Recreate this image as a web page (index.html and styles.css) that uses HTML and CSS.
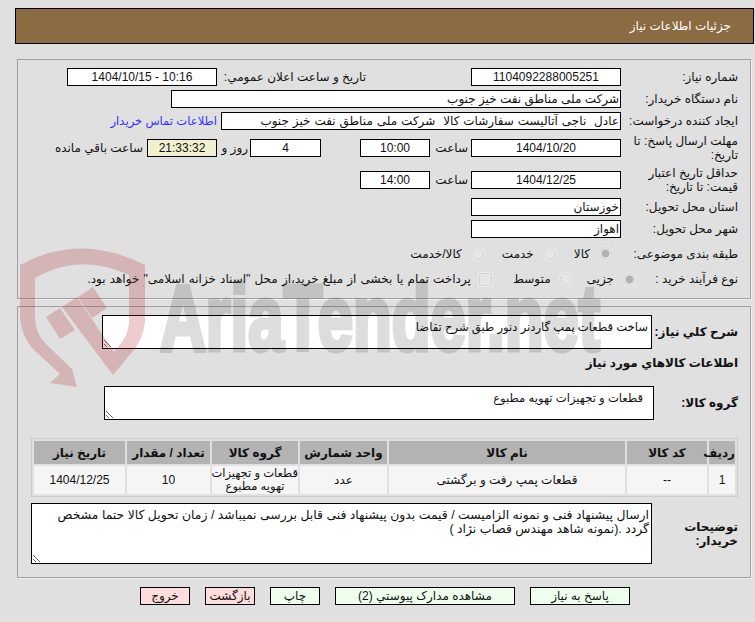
FILE: index.html
```html
<!DOCTYPE html>
<html lang="fa" dir="rtl">
<head>
<meta charset="utf-8">
<title>جزئیات اطلاعات نیاز</title>
<link rel="stylesheet" href="styles.css">
</head>
<body>
<header class="title-bar"><h1 class="title">جزئیات اطلاعات نیاز</h1></header>

<section class="panel panel-info">
  <div class="row">
    <span class="label">شماره نیاز:</span>
    <input class="field w150 center" readonly value="1104092288005251">
    <span class="announce">تاریخ و ساعت اعلان عمومي:</span>
    <input class="field w150 center" dir="ltr" readonly value="1404/10/15 - 10:16">
  </div>
  <div class="row">
    <span class="label">نام دستگاه خریدار:</span>
    <input class="field w450" readonly value="شرکت ملی مناطق نفت خیز جنوب">
  </div>
  <div class="row">
    <span class="label">ایجاد کننده درخواست:</span>
    <input class="field w400" readonly value="عادل  ناجی آتالیست سفارشات کالا  شرکت ملی مناطق نفت خیز جنوب">
    <a class="contact" href="#">اطلاعات تماس خریدار</a>
  </div>
  <div class="row row-tall">
    <span class="label">مهلت ارسال پاسخ: تا تاریخ:</span>
    <input class="field w150 center" readonly value="1404/10/20">
    <span class="time-label">ساعت</span>
    <input class="field w70 center" readonly value="10:00">
    <input class="field w71 center days" readonly value="4">
    <span class="days-label">روز و</span>
    <input class="field w70 center timer" readonly value="21:33:32">
    <span class="remain">ساعت باقي مانده</span>
  </div>
  <div class="row row-tall">
    <span class="label">حداقل تاریخ اعتبار قیمت: تا تاریخ:</span>
    <input class="field w150 center" readonly value="1404/12/25">
    <span class="time-label">ساعت</span>
    <input class="field w70 center" readonly value="14:00">
  </div>
  <div class="row">
    <span class="label">استان محل تحویل:</span>
    <input class="field w150" readonly value="خوزستان">
  </div>
  <div class="row">
    <span class="label">شهر محل تحویل:</span>
    <input class="field w150" readonly value="اهواز">
  </div>
  <div class="row row-radio">
    <span class="label">طبقه بندی موضوعی:</span>
    <label class="choice c-first"><input type="radio" name="subject" disabled checked><span>کالا</span></label>
    <label class="choice c-next"><input type="radio" name="subject" disabled><span>خدمت</span></label>
    <label class="choice c-next"><input type="radio" name="subject" disabled><span>کالا/خدمت</span></label>
  </div>
  <div class="row row-process">
    <span class="label label-short">نوع فرآیند خرید :</span>
    <label class="choice"><input type="radio" name="process" disabled checked><span>جزیی</span></label>
    <label class="choice c-mid"><input type="radio" name="process" disabled><span>متوسط</span></label>
    <label class="choice c-pay"><input type="checkbox" disabled><span class="pay-text">پرداخت تمام یا بخشی از مبلغ خرید،از محل "اسناد خزانه اسلامی" خواهد بود.</span></label>
  </div>
</section>

<section class="panel panel-goods">
  <div class="row-b">
    <span class="label-b w86">شرح کلي نیاز:</span>
    <textarea class="box desc" readonly>ساخت قطعات پمپ گاردنر دنور طبق شرح تقاضا</textarea>
  </div>
  <div class="goods-heading">اطلاعات کالاهاي مورد نیاز</div>
  <div class="row-b">
    <span class="label-b w84">گروه کالا:</span>
    <textarea class="box group" readonly>قطعات و تجهیزات تهویه مطبوع</textarea>
  </div>
  <table class="goods">
    <colgroup>
      <col class="col-idx"><col class="col-code"><col class="col-name"><col class="col-unit"><col class="col-group"><col class="col-qty"><col class="col-date">
    </colgroup>
    <thead>
      <tr><th>ردیف</th><th>کد کالا</th><th>نام کالا</th><th>واحد شمارش</th><th>گروه کالا</th><th>تعداد / مقدار</th><th>تاریخ نیاز</th></tr>
    </thead>
    <tbody>
      <tr><td>1</td><td>--</td><td>قطعات پمپ رفت و برگشتی</td><td>عدد</td><td class="small">قطعات و تجهیزات<br>تهویه مطبوع</td><td>10</td><td>1404/12/25</td></tr>
    </tbody>
  </table>
  <div class="row-b">
    <span class="label-b w86">توضیحات خریدار:</span>
    <textarea class="box note" readonly>ارسال پیشنهاد فنی و نمونه الزامیست / قیمت بدون پیشنهاد فنی قابل بررسی نمیباشد / زمان تحویل کالا حتما مشخص
گردد .(نمونه شاهد مهندس قصاب نژاد )</textarea>
  </div>
</section>

<nav class="actions">
  <button class="btn go b100">پاسخ به نیاز</button>
  <button class="btn go b180">مشاهده مدارک پیوستي (2)</button>
  <button class="btn go b50">چاپ</button>
  <button class="btn stop b50">بازگشت</button>
  <button class="btn stop b50">خروج</button>
</nav>

<svg class="watermark" viewBox="0 0 755 622" aria-hidden="true">
  <g class="wm-red">
    <path d="M20 265 Q80 232 145 265 L145 322 Q143 340 132 352 L113 375 L62 307 L77 297 L114 352 L122 342 Q129 332 129 320 L129 275 Q80 252 35 278 L35 320 Q36 334 46 344 L72 369 L77 387 L50 383 L60 374 L32 348 Q21 334 20 318 Z"/>
    <path d="M78 297 L93 287 L107 308 L92 318 Z"/>
    <path d="M46 317 L60 308 L75 330 L60 339 Z"/>
  </g>
  <text class="wm-text" x="160" y="350" textLength="440" lengthAdjust="spacingAndGlyphs">AriaTender.net</text>
</svg>
</body>
</html>
```
FILE: styles.css
```css
* { box-sizing: border-box; }
html, body { margin: 0; padding: 0; }
body {
  position: relative;
  width: 755px;
  height: 622px;
  overflow: hidden;
  background: #e0e0e0;
  color: #111;
  font-family: "Liberation Sans", "DejaVu Sans", sans-serif;
  font-size: 12px;
  line-height: 14px;
}
.title-bar {
  margin: 8px 1px 0 15px;
  height: 36px;
  background: #8b6b42;
  border: 1px solid #000;
  display: flex;
  align-items: center;
  padding-right: 22px;
}
.title { margin: 0; color: #fff; font-size: 12px; font-weight: normal; }

.panel {
  margin: 0 4px 0 17px;
  border: 1px solid #a0a0a0;
  box-shadow: 1px 1px 0 #f0f0f0;
}
.panel-info { margin-top: 15px; height: 240px; padding: 8px 12px 0 0; }
.panel-goods { margin-top: 7px; height: 272px; padding: 8px 12px 0 0; }

.row { display: flex; align-items: center; min-height: 18px; margin-bottom: 4px; }
.row-tall { min-height: 28px; }
.row-radio { min-height: 23px; }
.row-process { min-height: 20px; }
.label { width: 113px; margin-left: 4px; flex: none; }
.label-short { width: 98px; }
.announce { width: 144px; margin: 0 105px 0 5px; white-space: nowrap; }

.field {
  height: 18px;
  border: 1px solid #000;
  background: #fff;
  padding: 0 1px;
  font: inherit;
  color: #111;
  outline: none;
  flex: none;
}
.center { text-align: center; }
.w150 { width: 150px; }
.w450 { width: 450px; }
.w400 { width: 400px; word-spacing: 0.6px; }
.w70 { width: 70px; }
.w71 { width: 71px; }
.days { margin-right: 39px; }
.timer { background: #f0f0d0; }
.time-label { width: 34px; margin: 0 3px 0 4px; }
.days-label { width: 23px; margin: 0 2px 0 8px; white-space: nowrap; }
.remain { margin-right: 4px; white-space: nowrap; }
.contact { margin-right: 4px; color: #3333ff; text-decoration: none; white-space: nowrap; font-size: 11.6px; }

.choice { display: flex; align-items: center; white-space: nowrap; }
.choice input {
  appearance: none;
  margin: 0 0 0 9px;
  width: 13px;
  height: 13px;
  flex: none;
  background: #e6e6e6;
  border: 1px solid #d2d2d2;
  box-shadow: 0 0 0 1px #ececec;
}
.choice input[type="radio"] { border-radius: 50%; }
.choice input[type="radio"]:checked { background: radial-gradient(circle, #b2b2b2 0 3.5px, #e6e6e6 4.5px); }
.choice input[type="checkbox"] { border-radius: 2px; margin-left: 8px; }
.c-first { margin-right: 9px; }
.c-next { margin-right: 18px; }
.c-mid { margin-right: 14px; }
.c-pay { margin-right: 21px; }
.pay-text { word-spacing: 0.8px; }

.row-b { display: flex; align-items: center; }
.label-b { font-weight: bold; flex: none; }
.w86 { width: 86px; }
.w84 { width: 84px; }
.box {
  display: block;
  border: 1px solid #000;
  background: #fff;
  color: #111;
  font: inherit;
  overflow: hidden;
  padding: 4px 3px;
  outline: none;
  margin: 0;
  flex: none;
}
.desc { width: 550px; height: 34px; font-size: 11.6px; }
.group { width: 550px; height: 34px; padding-right: 10px; font-size: 11.6px; }
.note { width: 621px; height: 61px; padding: 4px 2px; font-size: 12.4px; }
.goods-heading { font-weight: bold; margin: 7px 0 16px; height: 14px; }

.goods {
  margin: 18px 0 6px;
  width: 707px;
  table-layout: fixed;
  border-collapse: separate;
  border-spacing: 2px;
  border: 1px solid #ccc;
  text-align: center;
  font-size: 12px;
}
.col-idx { width: 26px; }
.col-code { width: 80px; }
.col-name { width: 236px; }
.col-unit { width: 87px; }
.col-group { width: 86px; }
.col-qty { width: 83px; }
.col-date { width: 91px; }
.goods th { height: 23px; background: #b3b3b3; padding: 0; font-weight: bold; }
.goods td { height: 28px; background: #f5f5f5; padding: 0; }
.goods .small { line-height: 13px; font-size: 11.5px; white-space: nowrap; }

.actions { display: flex; gap: 15px; margin: 9px 125px 0 0; }
.btn {
  height: 18px;
  padding: 0;
  border: 1px solid #000;
  font: inherit;
  color: #111;
}
.go { background: #eeffee; }
.stop { background: #ffdddd; }
.b100 { width: 100px; }
.b180 { width: 180px; }
.b50 { width: 50px; }

.watermark {
  position: absolute;
  left: 0;
  top: 0;
  width: 755px;
  height: 622px;
  pointer-events: none;
}
.wm-red path { fill: rgba(175, 40, 40, 0.24); }
.wm-text {
  direction: ltr;
  font-family: "Liberation Sans", sans-serif;
  font-weight: bold;
  font-size: 92px;
  fill: #000;
  stroke: #000;
  stroke-width: 5px;
  opacity: 0.13;
}
```
